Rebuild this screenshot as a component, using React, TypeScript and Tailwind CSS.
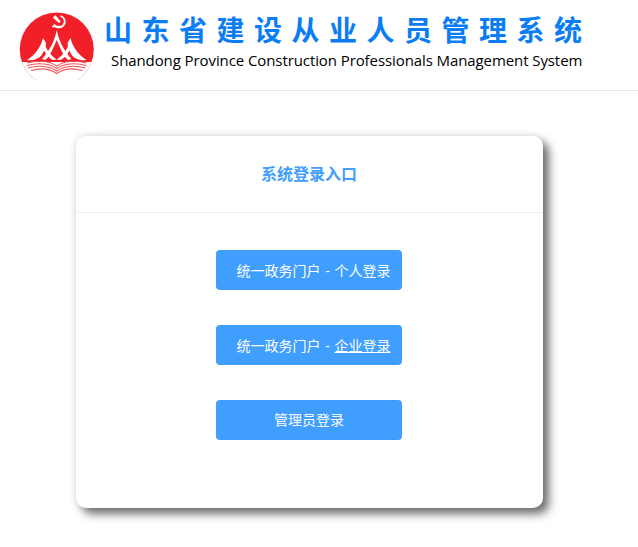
const cjk = "font-['Open_Sans','Noto_Sans_CJK_SC',sans-serif]";

function Logo() {
  return (
    <svg width="80" height="70" viewBox="18 10 80 70" className="shrink-0">
      <defs>
        <clipPath id="disc">
          <circle cx="56.750" cy="49.500" r="37" />
        </clipPath>
      </defs>
      <circle cx="56.750" cy="49.500" r="37" fill="#f01f28" />
      <rect x="18" y="62" width="80" height="20" fill="#fff" clipPath="url(#disc)" />
      <g fill="#fff">
        <path d="M43 38 C41 47 35 55 27 60 C33 61 38 59 41 56 C44 52 46 46 46 43 Z" />
        <path d="M70.500 38 C72.500 47 78.500 55 86.500 60 C80.500 61 75.500 59 72.500 56 C69.500 52 67.500 46 67.500 43 Z" />
        <path d="M43.500 41 C46 49 50 55 56.750 59.500 L53 60 C48 58 44 52 42.500 46 Z" />
        <path d="M70 41 C67.500 49 63.500 55 56.750 59.500 L60.500 60 C65.500 58 69.500 52 71 46 Z" />
        <path d="M56.750 30 C55 39 51 49 42 59 L45.500 60 C51 55 53.500 47 56.750 40 C60 47 62.500 55 68 60 L71.500 59 C62.500 49 58.500 39 56.750 30 Z" />
      </g>
      <g fill="none" stroke="#f2555b" strokeWidth="1.100">
        <path d="M27 63 C38 60 50 61 56.750 66 C63.500 61 75.500 60 86.500 63" />
        <path d="M27 65.500 C38 62.500 50 63.500 56.750 68.500 C63.500 63.500 75.500 62.500 86.500 65.500" />
        <path d="M28 68 C38 65 50 66 56.750 71 C63.500 66 75.500 65 85.500 68" />
        <path d="M31 70.500 C40 68 50 68.500 56.750 73.500 C63.500 68.500 73.500 68 82.500 70.500" />
      </g>
      <g stroke="#fff" fill="none">
        <path d="M60.500 16 A5.800 5.800 0 1 1 54 24.500" strokeWidth="1.800" />
        <path d="M53 17.500 L55.500 15.500 L60.500 21.500 L59 23 Z" fill="#fff" strokeWidth="0.400" />
        <path d="M52 26.500 H62" strokeWidth="1.500" />
      </g>
    </svg>
  );
}

function LoginButton({ children }: { children: React.ReactNode }) {
  return (
    <button className="flex h-10 w-[186px] items-center justify-center rounded-[4px] bg-[#409eff] text-[14px] text-white">
      {children}
    </button>
  );
}

export default function App() {
  return (
    <div className={`h-[547px] w-[638px] overflow-hidden bg-white ${cjk}`}>
      <header className="flex h-[91px] items-start gap-[6px] border-b border-[#e6e6e6] pt-[10px] pl-[18px]">
        <Logo />
        <div className="flex flex-col pt-[2px]">
          <h1 className="text-[28px] leading-[36px] font-bold tracking-[9.500px] whitespace-nowrap text-[#0a7df5]">
            山东省建设从业人员管理系统
          </h1>
          <p className="mt-[2px] ml-[7px] text-[15px] leading-[20px] tracking-[-0.090px] whitespace-nowrap text-black">
            Shandong Province Construction Professionals Management System
          </p>
        </div>
      </header>
      <main className="flex pt-[45px] pl-[76px]">
        <section className="h-[372px] w-[467px] rounded-[10px] bg-white shadow-[0_0_10px_rgba(0,0,0,0.12),6px_6px_10px_rgba(0,0,0,0.55)]">
          <div className="flex h-[77px] items-center justify-center border-b border-[#ebeef5] pr-[1px]">
            <h2 className="text-[16px] font-bold text-[#409eff]">系统登录入口</h2>
          </div>
          <div className="flex flex-col items-center gap-[35px] pt-[37px] pr-[1px]">
            <LoginButton>
              <span className="pl-[9px] [word-spacing:1px]">统一政务门户 - 个人登录</span>
            </LoginButton>
            <LoginButton>
              <span className="pl-[9px] [word-spacing:1px]">
                统一政务门户 - <span className="underline">企业登录</span>
              </span>
            </LoginButton>
            <LoginButton>
              <span className="pb-[2px]">管理员登录</span>
            </LoginButton>
          </div>
        </section>
      </main>
    </div>
  );
}
